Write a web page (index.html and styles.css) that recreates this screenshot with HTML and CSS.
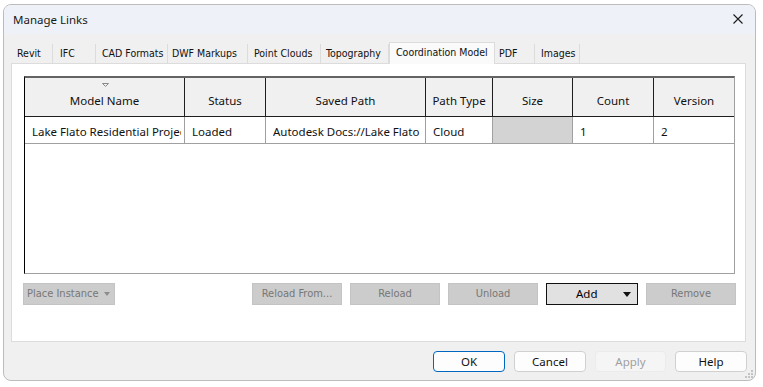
FILE: index.html
```html
<!DOCTYPE html>
<html>
<head>
<meta charset="utf-8">
<title>Manage Links</title>
<link rel="stylesheet" href="styles.css">
</head>
<body>
<div class="window">
  <div class="titlebar">
    <span class="title">Manage Links</span>
    <svg class="close" width="10" height="10" viewBox="0 0 10 10"><path d="M0.5 0.5 L9.5 9.5 M9.5 0.5 L0.5 9.5" stroke="#1a1a1a" stroke-width="1.1" fill="none"/></svg>
  </div>
  <div class="content">
    <div class="tabs">
      <div class="tab t-revit">Revit</div>
      <div class="tab t-ifc">IFC</div>
      <div class="tab t-cad">CAD Formats</div>
      <div class="tab t-dwf">DWF Markups</div>
      <div class="tab t-pc">Point Clouds</div>
      <div class="tab t-topo">Topography</div>
      <div class="tab t-coord active">Coordination Model</div>
      <div class="tab t-pdf">PDF</div>
      <div class="tab t-img">Images</div>
    </div>
    <div class="panel">
      <div class="grid">
        <table class="links">
          <colgroup>
            <col class="c1"><col class="c2"><col class="c3"><col class="c4"><col class="c5"><col class="c6"><col class="c7">
          </colgroup>
          <thead>
            <tr>
              <th class="sorted"><svg class="sort" width="7" height="4" viewBox="0 0 7 4"><path d="M0.5 0.5 L6.5 0.5 L3.5 3.5 Z" fill="none" stroke="#8a8a8a" stroke-width="1"/></svg>Model Name</th>
              <th>Status</th>
              <th>Saved Path</th>
              <th>Path Type</th>
              <th>Size</th>
              <th>Count</th>
              <th class="last">Version</th>
            </tr>
          </thead>
          <tbody>
            <tr>
              <td><div class="clip">Lake Flato Residential Project</div></td>
              <td><div class="clip">Loaded</div></td>
              <td><div class="clip">Autodesk Docs://Lake Flato</div></td>
              <td><div class="clip">Cloud</div></td>
              <td class="empty"></td>
              <td><div class="clip">1</div></td>
              <td class="last"><div class="clip">2</div></td>
            </tr>
          </tbody>
        </table>
      </div>
      <div class="actions">
        <button class="flat place">Place Instance <span class="caret"></span></button>
        <div class="spacer"></div>
        <button class="flat">Reload From...</button>
        <button class="flat">Reload</button>
        <button class="flat">Unload</button>
        <button class="add"><span>Add</span><span class="caret dark"></span></button>
        <button class="flat remove">Remove</button>
      </div>
    </div>
    <div class="footer">
      <button class="dlg default">OK</button>
      <button class="dlg">Cancel</button>
      <button class="dlg disabled">Apply</button>
      <button class="dlg">Help</button>
    </div>
  </div>
  <svg class="grip" width="9" height="9" viewBox="0 0 9 9">
    <rect x="7" y="1" width="2" height="2" fill="#c4c4c4"/>
    <rect x="4" y="4" width="2" height="2" fill="#c4c4c4"/>
    <rect x="7" y="4" width="2" height="2" fill="#c4c4c4"/>
    <rect x="1" y="7" width="2" height="2" fill="#c4c4c4"/>
    <rect x="4" y="7" width="2" height="2" fill="#c4c4c4"/>
    <rect x="7" y="7" width="2" height="2" fill="#c4c4c4"/>
  </svg>
</div>
</body>
</html>
```

FILE: styles.css
```css
* { box-sizing: border-box; }
html, body { margin: 0; padding: 0; background: #ffffff; }
body { padding: 4px 0 0 3px; font-family: "Noto Sans", "Open Sans", sans-serif; font-size: 11.5px; color: #000; }

.window {
  position: relative;
  width: 753px;
  height: 377px;
  border: 1px solid #bcbcbc;
  border-radius: 8px;
  background: #f0f0f0;
  overflow: hidden;
  display: flex;
  flex-direction: column;
}

.titlebar {
  height: 29px;
  flex: none;
  display: flex;
  align-items: center;
  padding: 0 12px 0 9px;
  background: #eef2f8;
}
.title { font-size: 11.5px; line-height: 16px; color: #1a1a1a; }
.close { margin-left: auto; display: block; margin-top: -1px; }

.content {
  flex: 1;
  display: flex;
  flex-direction: column;
  padding: 8px 9px 0 7px;
}

.tabs {
  height: 21px;
  display: flex;
  align-items: flex-end;
  font-family: "DejaVu Sans Condensed", "DejaVu Sans", sans-serif;
  font-stretch: condensed;
  font-size: 10.5px;
  position: relative;
  z-index: 1;
}
.tab {
  height: 19px;
  line-height: 19px;
  padding-left: 6px;
  color: #111;
  background: #f0f0f0;
  border-right: 1px solid #dcdcdc;
  white-space: nowrap;
  overflow: hidden;
}
.tab.active {
  height: 22px;
  line-height: 19px;
  margin-bottom: -1px;
  background: #fafafa;
  border: 1px solid #dcdcdc;
  border-bottom: none;
  padding-left: 6px;
}
.t-revit { width: 42px; }
.t-ifc { width: 43px; padding-left: 7px; }
.t-cad { width: 72px; }
.t-dwf { width: 80px; padding-left: 4px; }
.t-pc { width: 73px; padding-left: 6px; }
.t-topo { width: 68px; padding-left: 5px; }
.t-coord { width: 106px; }
.t-pdf { width: 40px; padding-left: 4px; }
.t-img { width: 45px; padding-left: 6px; }

.panel {
  height: 279px;
  flex: none;
  background: #ffffff;
  border: 1px solid #dcdcdc;
  padding: 12px 0 0 12px;
}

.grid {
  width: 711px;
  height: 198px;
  background: #fff;
  border-left: 1px solid #000;
  border-top: 2px solid #646464;
  border-right: 1px solid #a0a0a0;
  border-bottom: 1px solid #a0a0a0;
  overflow: hidden;
}
.links {
  table-layout: fixed;
  border-collapse: separate;
  border-spacing: 0;
  width: 709px;
  font-size: 11.5px;
}
.c1 { width: 160px; } .c2 { width: 81px; } .c3 { width: 160px; } .c4 { width: 67px; }
.c5 { width: 80px; } .c6 { width: 81px; } .c7 { width: 80px; }

.links th {
  height: 39px;
  padding: 15px 0 0;
  vertical-align: top;
  font-weight: normal;
  line-height: 16px;
  background: #f0f0f0;
  border-right: 1px solid #1e1e1e;
  border-bottom: 1px solid #1e1e1e;
  text-align: center;
  white-space: nowrap;
  color: #111;
}
.links th.sorted { padding-top: 5px; }
.sort { display: block; margin: 0 auto 6px; position: relative; left: 1px; }
.links th.last, .links td.last { border-right: none; }

.links td {
  height: 27px;
  padding: 0;
  vertical-align: top;
  border-right: 1px solid #a0a0a0;
  border-bottom: 1px solid #a0a0a0;
  color: #111;
}
.clip {
  margin: 0 3px 0 7px;
  padding-top: 3px;
  line-height: 23px;
  white-space: nowrap;
  overflow: hidden;
}
.links td.empty { background: #d3d3d3; }

.actions {
  display: flex;
  gap: 8px;
  margin: 9px 0 0 -1px;
  width: 713px;
  height: 22px;
}
.spacer { flex: 1; }
button { font: inherit; margin: 0; }
.flat {
  width: 90px;
  height: 22px;
  background: #cccccc;
  border: 1px solid #c4c4c4;
  color: #777777;
  font-family: "DejaVu Sans Condensed", "DejaVu Sans", sans-serif;
  font-stretch: condensed;
  font-size: 11px;
  padding: 0;
  line-height: 20px;
}
.flat.place {
  width: 92px;
  text-align: left;
  padding-left: 3px;
  display: flex;
  align-items: center;
  gap: 5px;
}
.caret {
  display: inline-block;
  width: 0; height: 0;
  border-left: 3.5px solid transparent;
  border-right: 3.5px solid transparent;
  border-top: 4px solid #8c8c8c;
}
.caret.dark { border-top-color: #111; border-left-width: 4px; border-right-width: 4px; border-top-width: 5px; }
.flat.remove { width: 90px; }

.add {
  width: 92px;
  height: 22px;
  background: #e1e1e1;
  border: 1px solid #111;
  color: #000;
  font-size: 11.5px;
  display: flex;
  align-items: center;
  padding: 0 6px 0 29px;
}
.add span:first-child { flex: 1; text-align: left; line-height: 20px; }

.footer {
  display: flex;
  justify-content: flex-end;
  gap: 9px;
  padding-top: 9px;
  margin-right: -1px;
}
.dlg {
  width: 72px;
  height: 21px;
  background: #fdfdfd;
  border: 1px solid #d0d0d0;
  border-radius: 4px;
  color: #111;
  font-size: 11.5px;
  line-height: 17px;
  padding: 0;
}
.dlg.default { border-color: #0067c0; }
.dlg.disabled { background: #f5f5f5; border-color: #ebebeb; color: #a0a0a0; width: 71px; }

.grip { position: absolute; right: 2px; bottom: 2px; display: block; }
```
